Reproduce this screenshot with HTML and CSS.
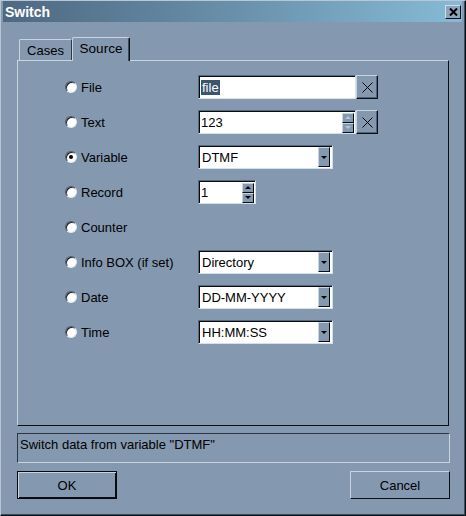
FILE: index.html
```html
<!DOCTYPE html>
<html>
<head>
<meta charset="utf-8">
<title>Switch</title>
<link rel="stylesheet" href="styles.css">
</head>
<body>
<div class="window">
  <div class="titlebar">
    <span class="title">Switch</span>
    <div class="close">
      <svg width="9" height="8" viewBox="0 0 9 8"><path d="M1 0.5 L8 7.5 M8 0.5 L1 7.5" stroke="#000" stroke-width="2"/></svg>
    </div>
  </div>
  <div class="content">
    <div class="tabs">
      <div class="tab">Cases</div>
      <div class="tab active">Source</div>
    </div>
    <div class="panel">
      <div class="row">
        <span class="radio"></span><span class="label">File</span>
        <div class="field wide"><span class="sel">file</span></div>
        <div class="xbtn"><svg width="11" height="11" viewBox="0 0 11 11"><path d="M0.5 0.5 L10.5 10.5 M10.5 0.5 L0.5 10.5" stroke="#000" stroke-width="1"/></svg></div>
      </div>
      <div class="row">
        <span class="radio"></span><span class="label">Text</span>
        <div class="field wide"><span class="val">123</span>
          <div class="spin dim"><span class="sb up"></span><span class="sb down"></span></div>
        </div>
        <div class="xbtn"><svg width="11" height="11" viewBox="0 0 11 11"><path d="M0.5 0.5 L10.5 10.5 M10.5 0.5 L0.5 10.5" stroke="#000" stroke-width="1"/></svg></div>
      </div>
      <div class="row">
        <span class="radio checked"></span><span class="label">Variable</span>
        <div class="field combo"><span class="val">DTMF</span><span class="drop"></span></div>
      </div>
      <div class="row">
        <span class="radio"></span><span class="label">Record</span>
        <div class="field small"><span class="val">1</span>
          <div class="spin"><span class="sb up"></span><span class="sb down"></span></div>
        </div>
      </div>
      <div class="row">
        <span class="radio"></span><span class="label">Counter</span>
      </div>
      <div class="row">
        <span class="radio"></span><span class="label">Info BOX (if set)</span>
        <div class="field combo"><span class="val">Directory</span><span class="drop"></span></div>
      </div>
      <div class="row">
        <span class="radio"></span><span class="label">Date</span>
        <div class="field combo"><span class="val">DD-MM-YYYY</span><span class="drop"></span></div>
      </div>
      <div class="row">
        <span class="radio"></span><span class="label">Time</span>
        <div class="field combo"><span class="val">HH:MM:SS</span><span class="drop"></span></div>
      </div>
    </div>
    <div class="status">Switch data from variable "DTMF"</div>
    <div class="buttons">
      <div class="btn default">OK</div>
      <div class="btn">Cancel</div>
    </div>
  </div>
</div>
</body>
</html>
```
FILE: styles.css
```css
* { box-sizing: border-box; }
html, body { margin: 0; padding: 0; }
body {
  background: #8498b0;
  font-family: "Liberation Sans", Arial, sans-serif;
  font-size: 13px;
  color: #000;
}
.window {
  width: 466px;
  height: 516px;
  border: 1px solid;
  border-color: #b8c6d6 #0c121a #0c121a #b8c6d6;
  box-shadow: inset -1px -1px #3c4a5a;
  padding: 0 3px 0 2px;
  display: flex;
  flex-direction: column;
}
.titlebar {
  height: 21px;
  background: linear-gradient(to right, #4e6882 0%, #6990aa 50%, #86bad6 100%);
  display: flex;
  align-items: center;
  justify-content: space-between;
  padding: 0 1px 0 2px;
}
.title {
  color: #fff;
  font-weight: bold;
  font-size: 14px;
  line-height: 16px;
}
.close {
  width: 16px;
  height: 14px;
  background: #8fa3bb;
  border: 1px solid;
  border-color: #d0dce8 #0c121a #0c121a #d0dce8;
  display: flex;
  align-items: center;
  justify-content: center;
}
.content {
  padding: 15px 13px 0 14px;
}
.tabs {
  height: 23px;
  display: flex;
  align-items: flex-end;
  padding-left: 2px;
}
.tab {
  height: 21px;
  width: 53px;
  text-align: center;
  padding-top: 3px;
  line-height: 15px;
  border-top: 1px solid #c8d4e0;
  border-left: 1px solid #c8d4e0;
  border-right: 1px solid #2c3846;
  border-radius: 2px 2px 0 0;
}
.tab.active {
  height: 24px;
  width: 58px;
  margin-bottom: -1px;
  position: relative;
  z-index: 1;
  background: #8498b0;
  border-right: 1px solid #0a0f16;
  box-shadow: inset -1px 0 #3c4a5a;
  font-size: 13.5px;
}
.panel {
  height: 366px;
  border: 1px solid;
  border-color: #c8d4e0 #0a0f16 #0a0f16 #c8d4e0;
  padding: 14px 0 0 47px;
  display: flex;
  flex-direction: column;
  gap: 11px;
}
.row {
  height: 24px;
  display: flex;
  align-items: center;
}
.radio {
  width: 12px;
  height: 12px;
  border-radius: 50%;
  background: #fff;
  border: 1px solid;
  border-color: #4a5868 #dfe7ef #dfe7ef #4a5868;
  box-shadow: inset 1px 1px #1a2028;
  margin-right: 4px;
  display: flex;
  align-items: center;
  justify-content: center;
}
.radio.checked::after {
  content: "";
  width: 4px;
  height: 4px;
  border-radius: 50%;
  background: #000;
}
.label {
  width: 117px;
  white-space: nowrap;
}
.field {
  height: 24px;
  background: #fff;
  border: 1px solid;
  border-color: #5a6a7e #d4e0ec #d4e0ec #5a6a7e;
  box-shadow: inset 1px 1px #080c12;
  display: flex;
  align-items: center;
  justify-content: space-between;
  padding: 0 1px 0 1px;
}
.field.wide { width: 158px; }
.field.small { width: 58px; }
.field.combo { width: 135px; padding-right: 2px; }
.val { padding-left: 1px; line-height: 15px; }
.combo .val { padding-left: 2px; }
.sel {
  background: #3b5470;
  color: #fff;
  padding: 0 1px;
  line-height: 15px;
  margin-left: 1px;
}
.xbtn {
  width: 22px;
  height: 24px;
  border: 1px solid;
  border-color: #c8d4e0 #0a0f16 #0a0f16 #c8d4e0;
  box-shadow: inset -1px -1px #52627a;
  display: flex;
  align-items: center;
  justify-content: center;
}
.spin {
  display: flex;
  flex-direction: column;
  margin-top: 1px;
}
.sb {
  width: 12px;
  height: 10px;
  background: #8498b0;
  border: 1px solid;
  border-color: #c8d4e0 #0a0f16 #0a0f16 #c8d4e0;
  display: flex;
  align-items: center;
  justify-content: center;
}
.sb.up::after {
  content: "";
  border-left: 3px solid transparent;
  border-right: 3px solid transparent;
  border-bottom: 3px solid #000;
}
.sb.down::after {
  content: "";
  border-left: 3px solid transparent;
  border-right: 3px solid transparent;
  border-top: 3px solid #000;
}
.spin.dim .sb.up::after { border-bottom-color: #b8c4d2; }
.spin.dim .sb.down::after { border-top-color: #b8c4d2; }
.drop {
  width: 12px;
  height: 20px;
  background: #8498b0;
  border: 1px solid;
  border-color: #c8d4e0 #0a0f16 #0a0f16 #c8d4e0;
  display: flex;
  align-items: center;
  justify-content: center;
}
.drop::after {
  content: "";
  border-left: 3px solid transparent;
  border-right: 3px solid transparent;
  border-top: 3px solid #000;
}
.status {
  margin-top: 7px;
  height: 30px;
  width: 433px;
  border: 1px solid;
  border-color: #2a3644 #c8d4e0 #c8d4e0 #2a3644;
  padding: 3px 0 0 2px;
  line-height: 15px;
}
.buttons {
  margin-top: 8px;
  display: flex;
  justify-content: space-between;
  width: 433px;
}
.btn {
  width: 100px;
  height: 28px;
  border: 1px solid;
  border-color: #c8d4e0 #0a0f16 #0a0f16 #c8d4e0;
  display: flex;
  align-items: center;
  justify-content: center;
}
.btn.default {
  border-color: #05080c;
  box-shadow: inset 1px 1px #c8d4e0, inset -1px -1px #0a0f16;
}
```
